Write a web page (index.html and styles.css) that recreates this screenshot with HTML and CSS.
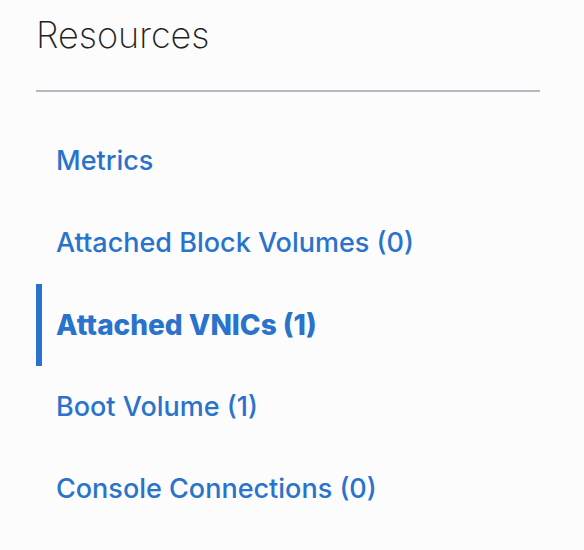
FILE: index.html
```html
<!DOCTYPE html>
<html lang="en">
<head>
<meta charset="utf-8">
<title>Resources</title>
<link rel="stylesheet" href="styles.css">
</head>
<body>
<nav class="resources" aria-labelledby="resources-title">
  <h2 class="title" id="resources-title">Resources</h2>
  <ul class="list">
    <li><a class="link" href="#metrics">Metrics</a></li>
    <li><a class="link" href="#block-volumes">Attached Block Volumes (0)</a></li>
    <li><a class="link link-active" href="#vnics" aria-current="page">Attached VNICs (1)</a></li>
    <li><a class="link" href="#boot-volume">Boot Volume (1)</a></li>
    <li><a class="link" href="#console">Console Connections (0)</a></li>
  </ul>
</nav>
</body>
</html>
```

FILE: styles.css
```css
body {
  margin: 0;
  background: #fcfcfc;
  font-family: Inter, "Liberation Sans", sans-serif;
}

.resources {
  padding: 10px 44px 0 36px;
}

.title {
  margin: 0;
  padding-bottom: 30px;
  border-bottom: 2px solid #b3b9c2;
  color: #222;
  font-size: 36px;
  font-weight: 200;
  line-height: 50px;
}

.list {
  margin: 28px 0 0;
  padding: 0;
  list-style: none;
}

.link {
  display: block;
  padding: 20px 14px;
  border-left: 6px solid transparent;
  color: #2a73cc;
  font-size: 27px;
  font-weight: 500;
  line-height: 42px;
  text-decoration: none;
}

.link-active {
  border-left-color: #2a73cc;
  font-size: 28px;
  font-weight: 800;
}
```
